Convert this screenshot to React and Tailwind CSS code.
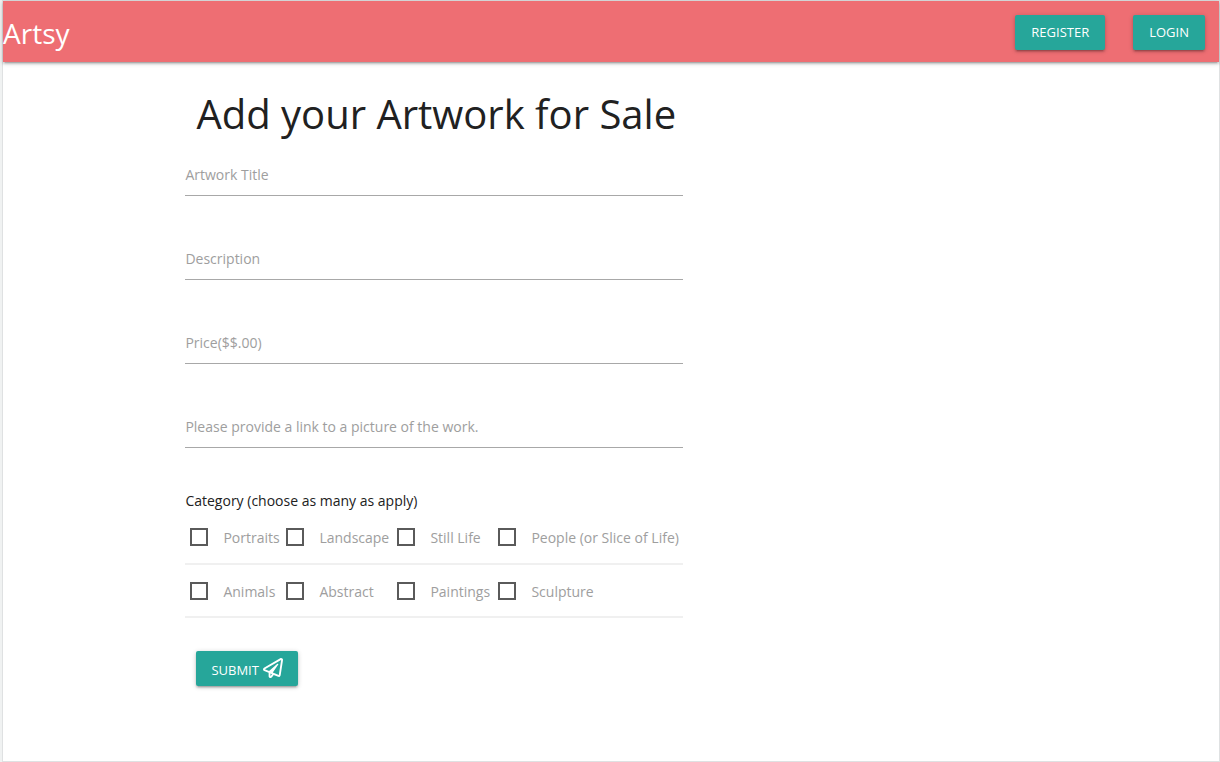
import { FaRegPaperPlane } from "react-icons/fa";

const fields = [
  { id: "title", label: "Artwork Title" },
  { id: "description", label: "Description" },
  { id: "price", label: "Price($$.00)" },
  { id: "link", label: "Please provide a link to a picture of the work." },
];

const categoryRows = [
  ["Portraits", "Landscape", "Still Life", "People (or Slice of Life)"],
  ["Animals", "Abstract", "Paintings", "Sculpture"],
];

const buttonStyle =
  "flex h-[35px] items-center rounded-xs bg-[#26a69a] text-[13px] uppercase text-white shadow-[0_2px_2px_0_rgba(0,0,0,0.14),0_3px_1px_-2px_rgba(0,0,0,0.12),0_1px_5px_0_rgba(0,0,0,0.2)]";

function Navbar() {
  return (
    <nav className="flex h-[61px] items-center justify-between bg-[#ee6e73] pt-px pr-[14px] shadow-[0_2px_2px_0_rgba(0,0,0,0.14),0_3px_1px_-2px_rgba(0,0,0,0.12),0_1px_5px_0_rgba(0,0,0,0.2)]">
      <a href="#home" className="pt-0.5 text-[28px] text-white">
        Artsy
      </a>
      <div className="flex gap-7">
        <button type="button" className={`${buttonStyle} px-4 pt-0.5`}>
          Register
        </button>
        <button type="button" className={`${buttonStyle} px-4 pt-0.5`}>
          Login
        </button>
      </div>
    </nav>
  );
}

function TextField({ id, label }) {
  return (
    <div className="relative">
      <input
        id={id}
        type="text"
        placeholder=" "
        className="peer block h-[44px] w-full border-b border-[#a8a8a8] bg-transparent text-[14px] text-[#212121] outline-none focus:border-[#26a69a]"
      />
      <label
        htmlFor={id}
        className="absolute left-0 top-[13px] text-[14px] leading-5 text-[#9e9e9e] peer-focus:-top-2 peer-[:not(:placeholder-shown)]:-top-2"
      >
        {label}
      </label>
    </div>
  );
}

function Category({ name }) {
  return (
    <label className="flex items-center gap-[15px] text-[14px] leading-5 text-[#9e9e9e]">
      <input
        type="checkbox"
        className="size-[18px] shrink-0 appearance-none border-2 border-[#5a5a5a] checked:border-[#26a69a] checked:bg-[#26a69a]"
      />
      <span className="whitespace-nowrap pt-0.5">{name}</span>
    </label>
  );
}

export default function App() {
  return (
    <div className="flex min-h-screen flex-col bg-[#f0f2f2] pl-[2px] font-['Open_Sans','Noto_Sans',sans-serif]">
      <div className="grow border border-[#dfe1e2] bg-white">
        <Navbar />
        <main className="mx-auto w-[70%]">
          <form className="w-[498px]" onSubmit={(e) => e.preventDefault()}>
            <h1 className="px-[11px] pt-[22px] text-[40px] font-normal leading-[60px] whitespace-nowrap text-[#212121]">
              Add your Artwork for Sale
            </h1>
            <div className="mt-2 flex flex-col gap-10">
              {fields.map((field) => (
                <TextField key={field.id} {...field} />
              ))}
            </div>
            <p className="mt-[43px] text-[14px] leading-5 text-[#212121]">
              Category (choose as many as apply)
            </p>
            <table className="w-full table-fixed border-collapse">
              <colgroup>
                <col className="w-[96px]" />
                <col className="w-[111px]" />
                <col className="w-[101px]" />
                <col />
              </colgroup>
              <tbody>
                {categoryRows.map((row) => (
                  <tr key={row[0]} className="h-[53px] border-b-2 border-[#f0f0f0]">
                    {row.map((name) => (
                      <td key={name} className="p-0 pl-[5px]">
                        <Category name={name} />
                      </td>
                    ))}
                  </tr>
                ))}
              </tbody>
            </table>
            <button type="submit" className={`${buttonStyle} mt-[33px] ml-[11px] gap-1 px-[15px]`}>
              <span className="pt-1">Submit</span>
              <FaRegPaperPlane className="mb-0.5 size-5" aria-hidden="true" />
            </button>
          </form>
        </main>
      </div>
    </div>
  );
}
